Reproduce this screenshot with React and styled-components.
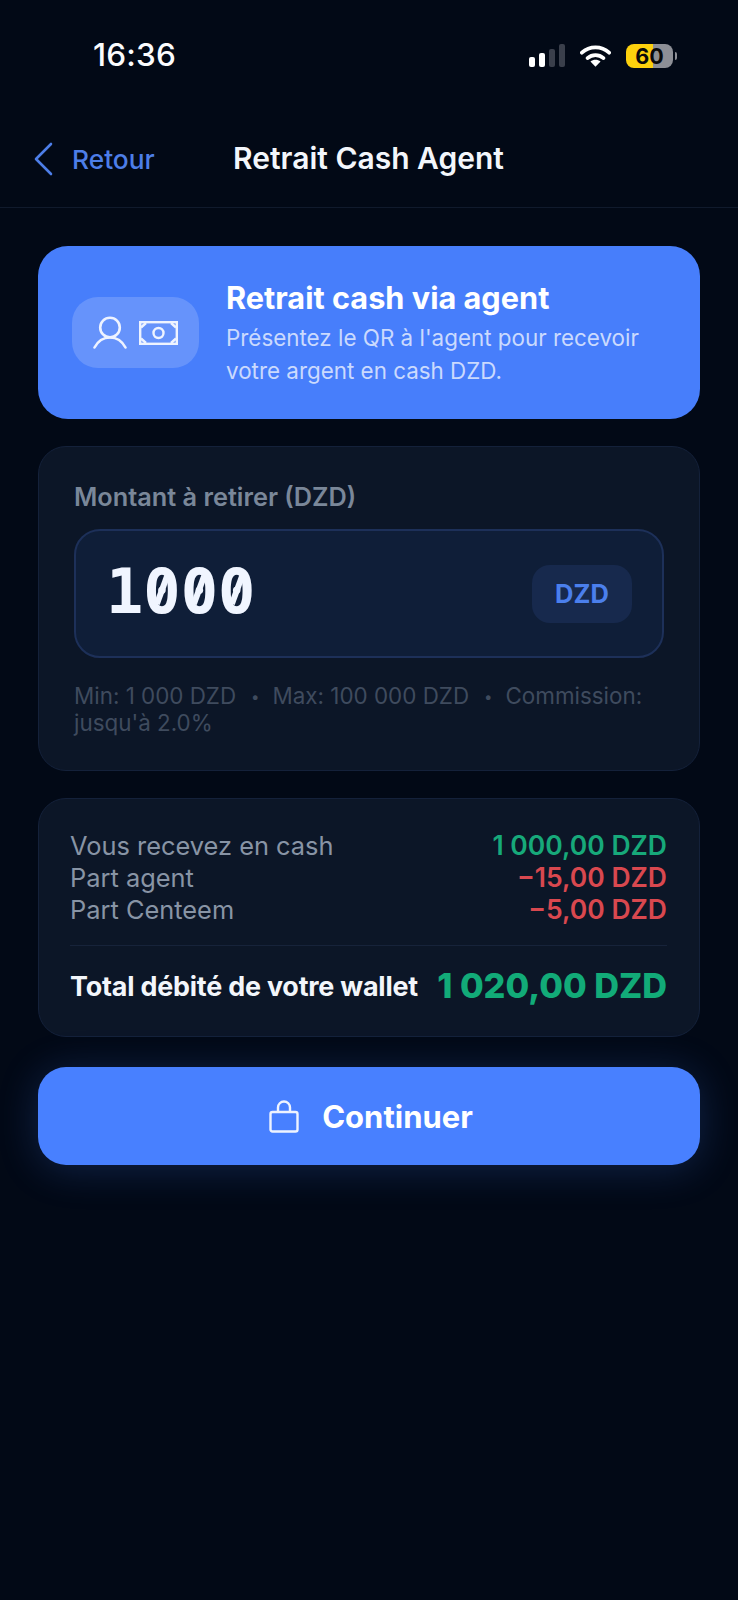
import React from "react";
import styled, { createGlobalStyle } from "styled-components";

const Global = createGlobalStyle`
  html, body { margin: 0; padding: 0; background: #020916; }
  * { box-sizing: border-box; }
`;

const Screen = styled.div`
  width: 738px;
  height: 1600px;
  background: #020916;
  font-family: Inter, "Liberation Sans", sans-serif;
  color: #fff;
  overflow: hidden;
`;

const StatusBar = styled.div`
  height: 110px;
  padding: 39px 65px 0 93px;
  display: flex;
  justify-content: space-between;
  align-items: flex-start;
`;
const Time = styled.div`
  font-size: 31.5px;
  font-weight: 500;
  line-height: 32px;
  letter-spacing: 0.2px;
  color: #fbfcfe;
`;
const StatusIcons = styled.div`
  display: flex;
  align-items: center;
  margin-top: 5px;
  gap: 15px;
`;
const Battery = styled.div`
  position: relative;
  width: 47px;
  height: 24px;
  border-radius: 8px;
  background: linear-gradient(90deg, #fdd10d 0 58%, #8d8f96 58% 100%);
  color: #0a0a0a;
  font-size: 21.5px;
  font-weight: 700;
  line-height: 24px;
  text-align: center;
  &::after {
    content: "";
    position: absolute;
    right: -4px;
    top: 8px;
    width: 2px;
    height: 8px;
    border-radius: 0 2px 2px 0;
    background: #8d8f96;
  }
`;

const Header = styled.div`
  height: 98px;
  border-bottom: 1px solid #101a2c;
  padding: 0 0 2px 33px;
  display: flex;
  align-items: flex-start;
`;
const Back = styled.div`
  display: flex;
  align-items: center;
  gap: 19px;
  width: 200px;
  height: 34px;
  margin-top: 32px;
  color: #4d7ee8;
  font-size: 26.3px;
  font-weight: 500;
`;
const Title = styled.div`
  margin-top: 31px;
  font-size: 30px;
  font-weight: 600;
  line-height: 34px;
  color: #f3f6fb;
`;

const Content = styled.div`
  padding: 38px 38px 0;
  display: flex;
  flex-direction: column;
`;

const Hero = styled.div`
  height: 173px;
  border-radius: 30px;
  background: #477efb;
  padding: 0 34px;
  display: flex;
  align-items: center;
  gap: 27px;
`;
const HeroIcon = styled.div`
  width: 127px;
  height: 71px;
  border-radius: 26px;
  background: rgba(255, 255, 255, 0.17);
  display: flex;
  align-items: center;
  justify-content: center;
  gap: 12px;
  flex: none;
`;
const HeroText = styled.div`
  display: flex;
  flex-direction: column;
  padding-top: 2px;
`;
const HeroTitle = styled.div`
  font-size: 30.7px;
  font-weight: 700;
  line-height: 36px;
  margin-bottom: 5px;
  color: #fff;
`;
const HeroSub = styled.div`
  font-size: 22.4px;
  line-height: 33px;
  color: rgba(255, 255, 255, 0.72);
`;

const Card = styled.div`
  margin-top: ${(p) => p.$top}px;
  border-radius: 28px;
  background: #0c1627;
  border: 1px solid #14213a;
  padding: ${(p) => p.$pad};
`;
const Label = styled.div`
  font-size: 25.3px;
  font-weight: 600;
  line-height: 28px;
  color: #7a8799;
`;
const InputBox = styled.div`
  margin-top: 18px;
  height: 129px;
  border-radius: 26px;
  background: #0f1e38;
  border: 2px solid #1d3059;
  padding: 0 30px 0 30px;
  display: flex;
  align-items: center;
  justify-content: space-between;
`;
const Amount = styled.div`
  font-family: "DejaVu Sans Mono", "Liberation Mono", monospace;
  font-size: 62px;
  font-weight: 700;
  line-height: 70px;
  color: #f0f5ff;
  margin-top: -4px;
`;
const Zero = styled.span`
  position: relative;
  &::after {
    content: "";
    position: absolute;
    left: 50%;
    top: 35px;
    width: 6px;
    height: 30px;
    background: #f0f5ff;
    transform: translate(-50%, -50%) rotate(20deg);
  }
`;
const Unit = styled.div`
  width: 100px;
  height: 58px;
  border-radius: 18px;
  background: #17294d;
  color: #4b7fec;
  font-size: 25.5px;
  font-weight: 700;
  display: flex;
  align-items: center;
  justify-content: center;
`;
const Hint = styled.div`
  margin-top: 24px;
  font-size: 22.4px;
  line-height: 27px;
  color: #3f4b5e;
`;
const Sep = styled.span`
  font-size: 15px;
  line-height: 0;
  margin: 0 13px 0 15px;
  vertical-align: 2px;
`;

const Row = styled.div`
  display: flex;
  justify-content: space-between;
  align-items: center;
  height: 32px;
  font-size: 25.4px;
`;
const RowLabel = styled.span`
  color: #8894a5;
`;
const RowValue = styled.span`
  font-size: 26.5px;
  font-weight: 600;
  color: ${(p) => p.$color};
`;
const Divider = styled.div`
  height: 1px;
  background: #17233a;
  margin: 20px 0 0;
`;
const TotalRow = styled.div`
  display: flex;
  justify-content: space-between;
  align-items: center;
  height: 79px;
`;
const TotalLabel = styled.span`
  font-size: 26.9px;
  font-weight: 700;
  color: #f3f6fb;
  letter-spacing: -0.2px;
`;
const TotalValue = styled.span`
  font-size: 34.3px;
  font-weight: 800;
  color: #12ab78;
`;

const Button = styled.button`
  margin-top: 30px;
  height: 98px;
  border: 0;
  border-radius: 28px;
  background: #4880ff;
  box-shadow: 0 4px 40px rgba(74, 127, 255, 0.22);
  color: #fff;
  font-family: inherit;
  font-size: 31px;
  font-weight: 700;
  padding: 0 0 0 4px;
  display: flex;
  align-items: center;
  justify-content: center;
  gap: 23px;
`;

const Signal = () => (
  <svg width="36" height="24" viewBox="0 0 36 24">
    <rect x="0" y="13" width="6" height="10" rx="2" fill="#fff" />
    <rect x="10" y="9" width="6" height="14" rx="2" fill="#fff" />
    <rect x="20" y="5" width="6" height="18" rx="2" fill="#3a3f4b" />
    <rect x="30" y="0" width="6" height="23" rx="2" fill="#3a3f4b" />
  </svg>
);
const Wifi = () => (
  <svg width="31" height="24" viewBox="0 0 33 24">
    <path d="M2 8.5C10.2 1 22.8 1 31 8.5" fill="none" stroke="#fff" strokeWidth="4" strokeLinecap="round" />
    <path d="M8 14.2c5-4.3 12-4.3 17 0" fill="none" stroke="#fff" strokeWidth="4" strokeLinecap="round" />
    <path d="M16.5 23.5l-5.4-5.6c3.2-2.4 7.6-2.4 10.8 0z" fill="#fff" />
  </svg>
);
const Chevron = () => (
  <svg width="20" height="34" viewBox="0 0 20 34">
    <path d="M18 2L3 17l15 15" fill="none" stroke="#4d7ee8" strokeWidth="2.6" strokeLinecap="round" strokeLinejoin="round" />
  </svg>
);
const Person = () => (
  <svg width="34" height="33" viewBox="0 0 34 33">
    <circle cx="17" cy="11.5" r="9.8" fill="none" stroke="#eef3ff" strokeWidth="2.6" />
    <path d="M1.5 31.5C5 25 10.5 21.5 17 21.5S29 25 32.5 31.5" fill="none" stroke="#eef3ff" strokeWidth="2.6" strokeLinecap="round" />
  </svg>
);
const Money = () => (
  <svg width="39" height="24" viewBox="0 0 39 24">
    <rect x="1.2" y="1.2" width="36.6" height="21.6" fill="none" stroke="#eef3ff" strokeWidth="2.4" />
    <circle cx="19.5" cy="12" r="5" fill="none" stroke="#eef3ff" strokeWidth="2.4" />
    <path d="M2 6.5L7 2M37 6.5L32 2M2 17.5L7 22M37 17.5L32 22" fill="none" stroke="#eef3ff" strokeWidth="2.4" />
  </svg>
);
const Lock = () => (
  <svg width="30" height="33" viewBox="0 0 30 33">
    <rect x="1.5" y="12" width="27" height="19.5" rx="2" fill="none" stroke="#eef3ff" strokeWidth="2.4" />
    <path d="M9 12V7.5a6 6 0 0 1 12 0V12" fill="none" stroke="#eef3ff" strokeWidth="2.4" />
  </svg>
);

export default function App() {
  return (
    <Screen>
      <Global />
      <StatusBar>
        <Time>16:36</Time>
        <StatusIcons>
          <Signal />
          <Wifi />
          <Battery>60</Battery>
        </StatusIcons>
      </StatusBar>
      <Header>
        <Back>
          <Chevron />
          Retour
        </Back>
        <Title>Retrait Cash Agent</Title>
      </Header>
      <Content>
        <Hero>
          <HeroIcon>
            <Person />
            <Money />
          </HeroIcon>
          <HeroText>
            <HeroTitle>Retrait cash via agent</HeroTitle>
            <HeroSub>
              Présentez le QR à l'agent pour recevoir votre argent en cash DZD.
            </HeroSub>
          </HeroText>
        </Hero>
        <Card $top={27} $pad="36px 35px 34px">
          <Label>Montant à retirer (DZD)</Label>
          <InputBox>
            <Amount>
              1<Zero>0</Zero>
              <Zero>0</Zero>
              <Zero>0</Zero>
            </Amount>
            <Unit>DZD</Unit>
          </InputBox>
          <Hint>
            Min: 1 000 DZD<Sep>•</Sep>Max: 100 000 DZD<Sep>•</Sep>Commission:
            <br />
            jusqu'à 2.0%
          </Hint>
        </Card>
        <Card $top={27} $pad="30px 32px 11px 31px">
          <Row>
            <RowLabel>Vous recevez en cash</RowLabel>
            <RowValue $color="#17a97a">1 000,00 DZD</RowValue>
          </Row>
          <Row>
            <RowLabel>Part agent</RowLabel>
            <RowValue $color="#d9484f">−15,00 DZD</RowValue>
          </Row>
          <Row>
            <RowLabel>Part Centeem</RowLabel>
            <RowValue $color="#d9484f">−5,00 DZD</RowValue>
          </Row>
          <Divider />
          <TotalRow>
            <TotalLabel>Total débité de votre wallet</TotalLabel>
            <TotalValue>1 020,00 DZD</TotalValue>
          </TotalRow>
        </Card>
        <Button>
          <Lock />
          Continuer
        </Button>
      </Content>
    </Screen>
  );
}
